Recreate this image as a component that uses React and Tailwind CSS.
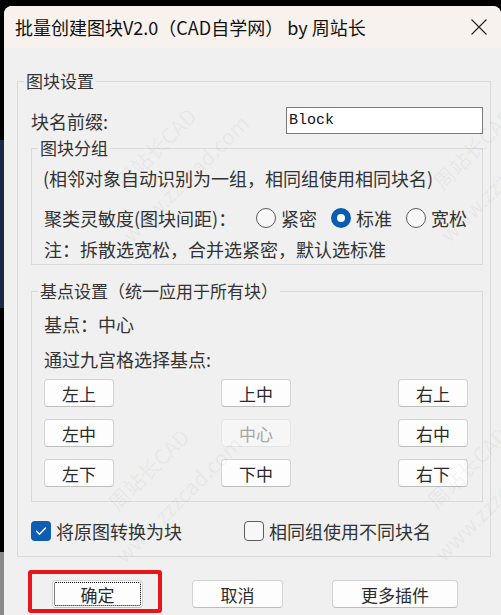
import clsx from "clsx";

const Btn = ({ children, className, disabled }) => (
  <div
    className={clsx(
      "flex h-[28px] items-center justify-center rounded-[4px] border text-[17px] leading-none",
      disabled
        ? "border-[#e4e4e4] bg-[#f6f6f6] text-[#a6a6a6]"
        : "border-[#d3d3d3] border-b-[#bdbdbd] bg-[#fdfdfd] text-[#2a2a2a]",
      className
    )}
  >
    {children}
  </div>
);

const Radio = ({ label, checked }) => (
  <div className="flex items-center gap-[5px]">
    {checked ? (
      <span className="flex h-[20px] w-[20px] items-center justify-center rounded-full bg-[#0a5cb0]">
        <span className="h-[8px] w-[8px] rounded-full bg-white" />
      </span>
    ) : (
      <span className="h-[20px] w-[20px] rounded-full border border-[#5c5c5c] bg-[#f7f7f7]" />
    )}
    <span>{label}</span>
  </div>
);

const Check = ({ label, checked, className }) => (
  <div className={clsx("flex items-center gap-[5px]", className)}>
    {checked ? (
      <span className="flex h-[20px] w-[20px] items-center justify-center rounded-[4px] bg-[#0f5db3]">
        <svg width="14" height="14" viewBox="0 0 14 14" fill="none">
          <path d="M2.5 7.3l3 3L11.5 4" stroke="white" strokeWidth="1.4" strokeLinecap="round" strokeLinejoin="round" />
        </svg>
      </span>
    ) : (
      <span className="h-[20px] w-[20px] rounded-[4px] border border-[#5c5c5c] bg-[#f7f7f7]" />
    )}
    <span>{label}</span>
  </div>
);

// faint diagonal watermark, centred on the given point
const Mark = ({ className }) => (
  <div
    className={clsx(
      "pointer-events-none absolute flex -translate-x-1/2 -translate-y-1/2 -rotate-45 flex-col items-center gap-[18px] whitespace-nowrap text-[21px] leading-[24px] text-black/[0.055]",
      className
    )}
  >
    <span>周站长CAD</span>
    <span>www.zzzcad.com</span>
  </div>
);

export default function App() {
  return (
    <div className="flex h-[615px] w-[501px] overflow-hidden bg-black font-['Noto_Sans_CJK_SC',sans-serif] text-[#333]">
      {/* strip of the window behind */}
      <div className="flex w-[4px] shrink-0 flex-col">
        <div className="h-[140px] bg-black" />
        <div className="h-[168px] bg-[#1b2746]" />
        <div className="h-[244px] bg-black" />
        <div className="flex-1 bg-[#8a8a8a]" />
      </div>

      <div className="relative mt-[6px] flex flex-1 flex-col overflow-hidden rounded-t-[8px] bg-[#f0f0f0]">
        {/* title bar */}
        <div className="flex h-[42px] shrink-0 items-center justify-between bg-[#f8f2ee] pl-[11px] pr-[14px]">
          <span className="text-[18px] leading-none text-[#111]">批量创建图块V2.0（CAD自学网） by 周站长</span>
          <svg width="16" height="16" viewBox="0 0 16 16">
            <path d="M0.5 0.5L15.5 15.5M15.5 0.5L0.5 15.5" stroke="#222" strokeWidth="1.1" />
          </svg>
        </div>

        <div className="flex flex-1 flex-col pl-[13px] pr-[10px] pt-[23px]">
          <fieldset className="border border-[#d9d9d9] pb-[13px] pl-[13px] pr-[7px]">
            <legend className="ml-[-7px] px-[2px] text-[17px] leading-[20px]">图块设置</legend>

            <div className="mt-[16px] flex items-center justify-between text-[18px] leading-[24px]">
              <span>块名前缀:</span>
              <div className="flex h-[27px] w-[197px] items-center border border-[#7a7a7a] bg-white pl-[2px] font-['Liberation_Mono',monospace] text-[15px] text-[#111]">
                Block
              </div>
            </div>

            <fieldset className="mt-[4px] border border-[#d9d9d9] pb-[3px] pl-[12px] pr-[10px] text-[18px] leading-[24px]">
              <legend className="ml-[-6px] px-[2px] text-[17px] leading-[20px]">图块分组</legend>
              <p className="mt-[8px] ml-[-1px]">(相邻对象自动识别为一组，相同组使用相同块名)</p>
              <div className="mt-[16px] flex h-[24px] items-center">
                <span className="w-[212px] shrink-0">聚类灵敏度(图块间距)：</span>
                <div className="flex items-center gap-[14px]">
                  <Radio label="紧密" />
                  <Radio label="标准" checked />
                  <Radio label="宽松" />
                </div>
              </div>
              <p className="mt-[7px]">注：拆散选宽松，合并选紧密，默认选标准</p>
            </fieldset>

            <fieldset className="mt-[16px] border border-[#d9d9d9] pb-[14px] pl-[12px] pr-[14px] text-[18px] leading-[24px]">
              <legend className="ml-[-6px] px-[2px] text-[17px] leading-[20px]">基点设置（统一应用于所有块）</legend>
              <p className="mt-[11px]">基点：中心</p>
              <p className="mt-[11px]">通过九宫格选择基点:</p>
              <div className="mt-[8px] grid grid-cols-3 gap-y-[12px]">
                <Btn className="w-[70px] justify-self-start">左上</Btn>
                <Btn className="w-[70px] justify-self-center">上中</Btn>
                <Btn className="w-[70px] justify-self-end">右上</Btn>
                <Btn className="w-[70px] justify-self-start">左中</Btn>
                <Btn className="w-[70px] justify-self-center" disabled>中心</Btn>
                <Btn className="w-[70px] justify-self-end">右中</Btn>
                <Btn className="w-[70px] justify-self-start">左下</Btn>
                <Btn className="w-[70px] justify-self-center">下中</Btn>
                <Btn className="w-[70px] justify-self-end">右下</Btn>
              </div>
            </fieldset>

            <div className="mt-[17px] flex h-[24px] items-center text-[18px] leading-[24px]">
              <Check label="将原图转换为块" checked className="w-[213px] shrink-0" />
              <Check label="相同组使用不同块名" />
            </div>
          </fieldset>

          <div className="mt-[23px] flex gap-[49px] pl-[35px]">
            <Btn className="w-[91px] outline-1 outline-dotted outline-offset-[-3px] outline-black">确定</Btn>
            <Btn className="w-[91px]">取消</Btn>
            <Btn className="w-[126px]">更多插件</Btn>
          </div>
        </div>

        <Mark className="left-[166px] top-[157px]" />
        <Mark className="left-[159px] top-[478px]" />
        <Mark className="left-[484px] top-[157px]" />
        <Mark className="left-[478px] top-[476px]" />

        {/* red annotation box */}
        <div className="pointer-events-none absolute left-[24px] top-[564px] h-[43px] w-[134px] rounded-[3px] border-4 border-[#e8161b]" />
      </div>
    </div>
  );
}
